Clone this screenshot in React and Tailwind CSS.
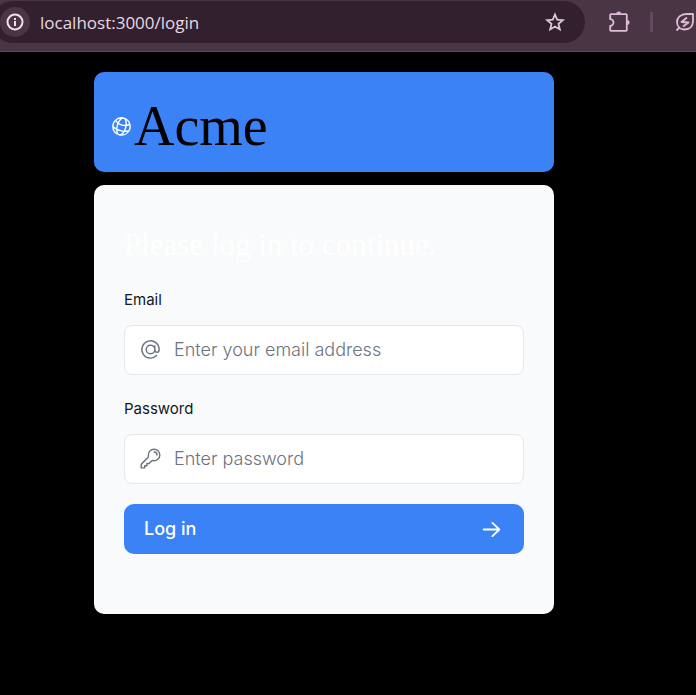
import {
  HiMiniArrowRight,
  HiOutlineAtSymbol,
  HiOutlineGlobeAlt,
  HiOutlineKey,
} from "react-icons/hi2";

function BrowserBar() {
  return (
    <header className="flex h-13 items-start border-b border-[#5a4656] bg-[#4a3545] pt-px font-['Open_Sans',sans-serif]">
      <div className="-ml-2 flex h-[42px] flex-1 items-center rounded-full bg-[#33202f] pr-5 pl-2">
        <button
          type="button"
          aria-label="Site information"
          className="flex size-[30px] items-center justify-center rounded-full bg-[#4a3545] text-[#f0dfea]"
        >
          <svg viewBox="0 0 18 18" className="size-[18px]" fill="none" stroke="currentColor" strokeWidth="2">
            <circle cx="9" cy="9" r="7.5" />
            <path d="M9 8v5M9 5v2" />
          </svg>
        </button>
        <input
          aria-label="Address"
          type="text"
          defaultValue="localhost:3000/login"
          className="ml-[10px] min-w-0 flex-1 bg-transparent pt-0.5 text-[17px] text-[#e6d9e2] outline-none"
        />
        <button type="button" aria-label="Bookmark this page" className="text-[#dccbd6]">
          <svg viewBox="0 0 20 20" className="size-5" fill="none" stroke="currentColor" strokeWidth="1.8">
            <path d="M10 2.5l2.2 5.2 5.6.5-4.3 3.7 1.3 5.5L10 14.5l-4.8 2.9 1.3-5.5-4.3-3.7 5.6-.5z" />
          </svg>
        </button>
      </div>
      <div className="flex h-[42px] shrink-0 items-center pl-[22px] text-[#dfbdd8]">
        <button type="button" aria-label="Extensions">
          <svg viewBox="0 0 24 24" className="size-6" fill="none" stroke="currentColor" strokeWidth="1.8" strokeLinejoin="round">
            <path d="M4 4.200h15q.8 0 .8.800v15q0 .8-.8.800H4q-.8 0-.8-.800v-4.200a3.300 3.300 0 0 0 0-6.600V5q0-.8.8-.800z" />
            <path d="M9.300 3.800a2.400 2.400 0 0 1 4.800 0zM20.200 10.100a2.400 2.400 0 0 1 0 4.800z" fill="currentColor" stroke="none" />
          </svg>
        </button>
        <span className="ml-[19px] h-5 w-[3px] bg-[#62495d]" />
        <button type="button" aria-label="Energy saver" className="ml-[22px] w-[21px]">
          <svg viewBox="0 0 20 20" className="size-5" fill="none" stroke="currentColor" strokeWidth="1.8" strokeLinejoin="round">
            <path d="M18 2h-6.500c-6 0-9.500 3.500-9.500 8 0 4.500 3 7.500 7.500 7.500 5.500 0 8.500-3.500 8.500-8.500zM5 15l-3.500 3.500" />
            <path d="M12 5.500L6.500 10l7 .5L8 14.500" />
          </svg>
        </button>
      </div>
    </header>
  );
}

function Field({ id, label, type, placeholder, icon: Icon }) {
  return (
    <div>
      <label htmlFor={id} className="block text-[15px] leading-5 text-[#111827]">
        {label}
      </label>
      <div className="mt-[15px] flex h-[50px] items-center rounded-lg border border-gray-200 bg-white pb-0.5 pl-[14px] text-[#6b7280]">
        <Icon className="size-[23px] shrink-0" />
        <input
          id={id}
          type={type}
          placeholder={placeholder}
          className="h-full min-w-0 flex-1 bg-transparent pr-3 pl-3 text-lg font-light outline-none placeholder:text-[#6b7280]"
        />
      </div>
    </div>
  );
}

export default function App() {
  return (
    <div className="min-h-screen bg-black font-['Inter',sans-serif]">
      <BrowserBar />
      <main className="flex justify-center pr-12">
        <div className="flex w-full max-w-[500px] flex-col gap-[13px] p-5">
          <div className="flex h-[100px] items-center rounded-[10px] bg-[#3b82f6] pt-2 pl-4 text-white">
            <HiOutlineGlobeAlt className="size-[23px] rotate-15" />
            <p className="pl-px font-['Liberation_Serif',serif] text-[56px] leading-none text-black">Acme</p>
          </div>
          <form className="rounded-[10px] bg-[#f9fafb] px-[30px] pt-10 pb-15">
            <h1 className="font-['Liberation_Serif',serif] text-[31px] leading-10 whitespace-nowrap text-white">
              Please log in to continue.
            </h1>
            <div className="mt-[25px] flex flex-col gap-6">
              <Field
                id="email"
                label="Email"
                type="email"
                placeholder="Enter your email address"
                icon={HiOutlineAtSymbol}
              />
              <Field
                id="password"
                label="Password"
                type="password"
                placeholder="Enter password"
                icon={HiOutlineKey}
              />
            </div>
            <button
              type="button"
              className="mt-5 flex h-[50px] w-full items-center justify-between rounded-[10px] bg-[#3b82f6] px-5 text-lg font-medium text-white"
            >
              Log in
              <HiMiniArrowRight className="size-[25px]" />
            </button>
          </form>
        </div>
      </main>
    </div>
  );
}
